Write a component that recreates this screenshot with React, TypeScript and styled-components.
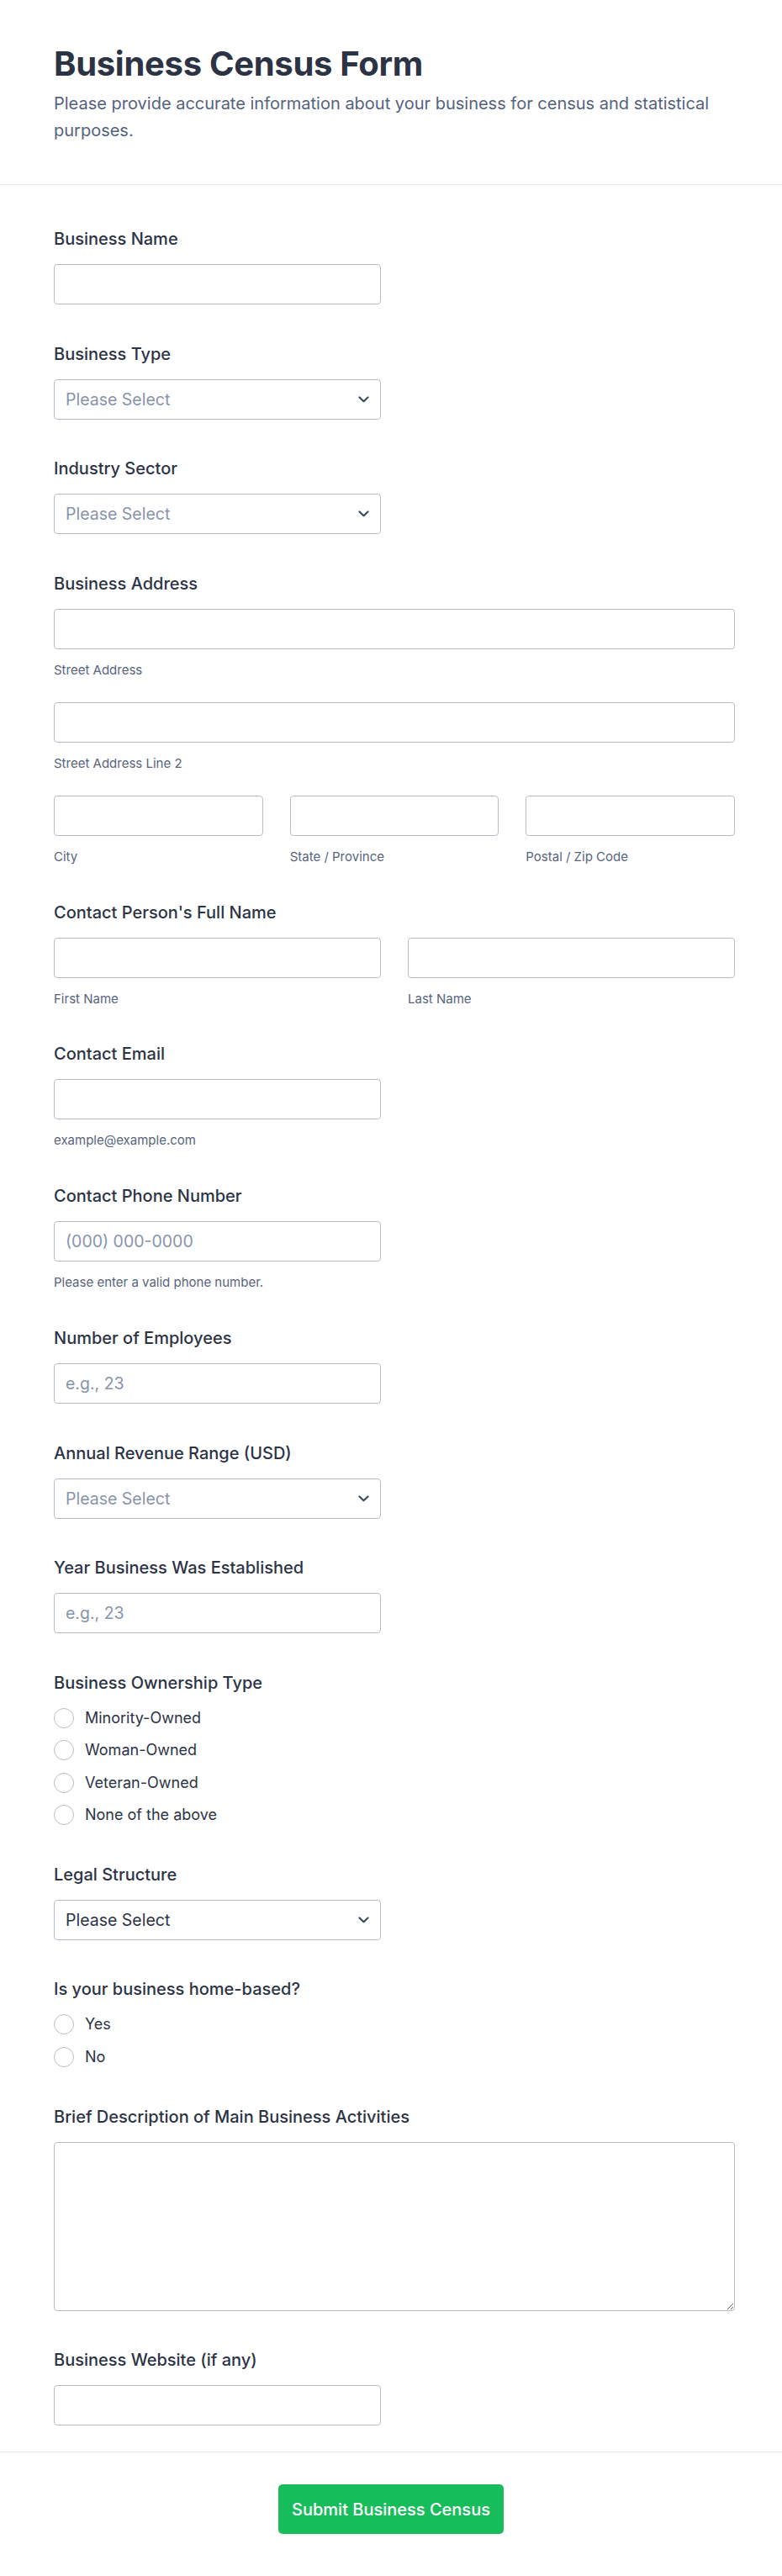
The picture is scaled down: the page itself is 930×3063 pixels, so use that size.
import styled, { createGlobalStyle } from 'styled-components'

const GlobalStyle = createGlobalStyle`
	* { box-sizing: border-box; }
	body {
		margin: 0;
		background: #ffffff;
		font-family: Inter, "Noto Sans", "Liberation Sans", sans-serif;
		color: #2c3345;
	}
`

const Page = styled.div`
	width: 100%;
	background: #ffffff;
`

const Header = styled.header`
	padding: 52px 56px 48px 64px;
	border-bottom: 1px solid #e3e8ee;
`

const Title = styled.h1`
	margin: 0;
	font-size: 40px;
	line-height: 48px;
	font-weight: 700;
	color: #2c3345;
	letter-spacing: -0.3px;
`

const Subtitle = styled.p`
	margin: 7px 0 0;
	font-size: 20px;
	line-height: 32px;
	color: #54627d;
`

const Form = styled.form`
	display: flex;
	flex-direction: column;
	gap: 46.7px;
	padding: 52px 56px 31px 64px;
`

const Field = styled.div`
	display: flex;
	flex-direction: column;
`

const Label = styled.label`
	font-size: 20px;
	line-height: 24px;
	font-weight: 500;
	color: #2c3345;
	margin-bottom: 18px;
`

const Input = styled.input<{ $half?: boolean }>`
	width: ${p => (p.$half ? 'calc(50% - 16px)' : '100%')};
	height: 48px;
	padding: 0 13px;
	border: 1px solid #b8bdc9;
	border-radius: 4px;
	background: #fff;
	font-family: inherit;
	font-size: 19.5px;
	color: #2c3345;
	&::placeholder { color: #8894ab; }
`

const SelectWrap = styled.div`
	position: relative;
	width: calc(50% - 16px);
`

const Select = styled.select<{ $filled?: boolean }>`
	appearance: none;
	width: 100%;
	height: 48px;
	padding: 0 40px 0 13px;
	border: 1px solid #b8bdc9;
	border-radius: 4px;
	background: #fff;
	font-family: inherit;
	font-size: 19.5px;
	color: ${p => (p.$filled ? '#2c3345' : '#8894ab')};
`

const Chevron = styled.svg`
	position: absolute;
	right: 14px;
	top: 50%;
	transform: translateY(-50%);
	pointer-events: none;
`

const Stack = styled.div`
	display: flex;
	flex-direction: column;
	gap: 31px;
`

const Row = styled.div<{ $cols: number }>`
	display: grid;
	grid-template-columns: repeat(${p => p.$cols}, 1fr);
	gap: 32px;
`

const Cell = styled.div`
	display: flex;
	flex-direction: column;
`

const SubLabel = styled.span`
	margin-top: 18px;
	font-size: 15px;
	line-height: 14px;
	color: #57647e;
`

const RadioList = styled.div`
	display: flex;
	flex-direction: column;
	gap: 14.4px;
`

const RadioOption = styled.label`
	display: flex;
	align-items: center;
	gap: 13px;
	font-size: 18px;
	line-height: 24px;
	color: #2c3345;
`

const RadioCircle = styled.input`
	appearance: none;
	margin: 0;
	width: 24px;
	height: 24px;
	border: 1px solid #b8bdc9;
	border-radius: 50%;
	background: #fff;
	flex-shrink: 0;
`

const TextArea = styled.textarea`
	width: 100%;
	height: 201px;
	padding: 10px 13px;
	border: 1px solid #b8bdc9;
	border-radius: 4px;
	font-family: inherit;
	font-size: 19px;
	resize: vertical;
`

const Footer = styled.div`
	display: flex;
	justify-content: center;
	padding: 38px 0 49px;
	border-top: 1px solid #e3e8ee;
`

const SubmitButton = styled.button`
	height: 59px;
	padding: 0 16px;
	border: none;
	border-radius: 5px;
	background: #18bd5b;
	color: #fff;
	font-family: inherit;
	font-size: 20px;
	font-weight: 500;
`

function SelectBox({ filled }: { filled?: boolean }) {
	return (
		<SelectWrap>
			<Select $filled={filled} defaultValue="">
				<option value="">Please Select</option>
			</Select>
			<Chevron width="13" height="8" viewBox="0 0 13 8" fill="none">
				<path d="M1.5 1.5L6.5 6.2L11.5 1.5" stroke="#3d475c" strokeWidth="2.2" strokeLinecap="round" strokeLinejoin="round" />
			</Chevron>
		</SelectWrap>
	)
}

function Radios({ name, options }: { name: string; options: string[] }) {
	return (
		<RadioList>
			{options.map(o => (
				<RadioOption key={o}>
					<RadioCircle type="radio" name={name} />
					{o}
				</RadioOption>
			))}
		</RadioList>
	)
}

export default function App() {
	return (
		<Page>
			<GlobalStyle />
			<Header>
				<Title>Business Census Form</Title>
				<Subtitle>Please provide accurate information about your business for census and statistical purposes.</Subtitle>
			</Header>
			<Form onSubmit={e => e.preventDefault()}>
				<Field>
					<Label>Business Name</Label>
					<Input $half />
				</Field>
				<Field>
					<Label>Business Type</Label>
					<SelectBox />
				</Field>
				<Field>
					<Label>Industry Sector</Label>
					<SelectBox />
				</Field>
				<Field>
					<Label>Business Address</Label>
					<Stack>
						<Row $cols={1}>
							<Cell>
								<Input />
								<SubLabel>Street Address</SubLabel>
							</Cell>
						</Row>
						<Row $cols={1}>
							<Cell>
								<Input />
								<SubLabel>Street Address Line 2</SubLabel>
							</Cell>
						</Row>
						<Row $cols={3}>
							<Cell>
								<Input />
								<SubLabel>City</SubLabel>
							</Cell>
							<Cell>
								<Input />
								<SubLabel>State / Province</SubLabel>
							</Cell>
							<Cell>
								<Input />
								<SubLabel>Postal / Zip Code</SubLabel>
							</Cell>
						</Row>
					</Stack>
				</Field>
				<Field>
					<Label>Contact Person's Full Name</Label>
					<Row $cols={2}>
						<Cell>
							<Input />
							<SubLabel>First Name</SubLabel>
						</Cell>
						<Cell>
							<Input />
							<SubLabel>Last Name</SubLabel>
						</Cell>
					</Row>
				</Field>
				<Field>
					<Label>Contact Email</Label>
					<Input $half type="email" />
					<SubLabel>example@example.com</SubLabel>
				</Field>
				<Field>
					<Label>Contact Phone Number</Label>
					<Input $half placeholder="(000) 000-0000" />
					<SubLabel>Please enter a valid phone number.</SubLabel>
				</Field>
				<Field>
					<Label>Number of Employees</Label>
					<Input $half placeholder="e.g., 23" />
				</Field>
				<Field>
					<Label>Annual Revenue Range (USD)</Label>
					<SelectBox />
				</Field>
				<Field>
					<Label>Year Business Was Established</Label>
					<Input $half placeholder="e.g., 23" />
				</Field>
				<Field>
					<Label>Business Ownership Type</Label>
					<Radios name="ownership" options={['Minority-Owned', 'Woman-Owned', 'Veteran-Owned', 'None of the above']} />
				</Field>
				<Field>
					<Label>Legal Structure</Label>
					<SelectBox filled />
				</Field>
				<Field>
					<Label>Is your business home-based?</Label>
					<Radios name="home" options={['Yes', 'No']} />
				</Field>
				<Field>
					<Label>Brief Description of Main Business Activities</Label>
					<TextArea />
				</Field>
				<Field>
					<Label>Business Website (if any)</Label>
					<Input $half />
				</Field>
			</Form>
			<Footer>
				<SubmitButton type="button">Submit Business Census</SubmitButton>
			</Footer>
		</Page>
	)
}
